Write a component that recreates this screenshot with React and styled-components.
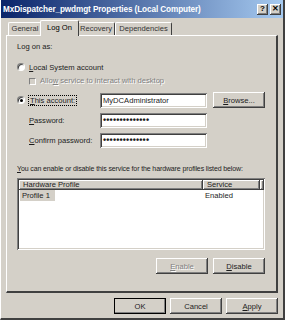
import React from 'react';
import styled, {createGlobalStyle} from "styled-components";

const Global = createGlobalStyle`
  html, body { margin: 0; padding: 0; background: #d4d0c8; }
  body { font-family: "Liberation Sans", Arial, sans-serif; font-size: 7.6px; color: #1c1c1c; }
  * { box-sizing: border-box; }
`

const raised = `box-shadow: inset -1px -1px #404040, inset 1px 1px #ffffff, inset -2px -2px #808080, inset 2px 2px #d4d0c8;`
const sunken = `box-shadow: inset 1px 1px #808080, inset -1px -1px #ffffff, inset 2px 2px #404040, inset -2px -2px #d4d0c8;`

const Window = styled.div`
  width: 285px;
  height: 320px;
  background: #d4d0c8;
  border-right: 2px solid #404040;
  border-bottom: 2px solid #404040;
  border-left: 1px solid #ffffff;
  display: flex;
  flex-direction: column;
`

const TitleBar = styled.div`
  height: 18px;
  background: linear-gradient(to right, #0a246a, #a6caf0);
  display: flex;
  align-items: center;
  justify-content: space-between;
  padding: 0 2px 0 2px;
`

const Title = styled.span`
  color: white;
  font-weight: bold;
  font-size: 8.2px;
  letter-spacing: -0.1px;
`

const TitleButtons = styled.div`
  display: flex;
  gap: 2px;
`

const TitleButton = styled.div`
  width: 11px;
  height: 11px;
  background: #d4d0c8;
  ${raised}
  display: flex;
  align-items: center;
  justify-content: center;
  font-weight: bold;
  font-size: 8px;
  line-height: 1;
  color: #000;
`

const TabStrip = styled.div`
  height: 16px;
  margin-top: 1px;
  padding-left: 7px;
  display: flex;
  align-items: flex-end;
  position: relative;
  z-index: 1;
`

const Tab = styled.div`
  height: ${props => props.active ? "16px" : "13px"};
  width: ${props => props.w}px;
  margin: ${props => props.active ? "0 -2px 0 -2px" : "0"};
  padding-top: ${props => props.active ? "2px" : "1px"};
  text-align: center;
  background: #d4d0c8;
  border-top: 1px solid #ffffff;
  border-left: 1px solid #ffffff;
  border-right: 1px solid #404040;
  border-top-left-radius: 2px;
  border-top-right-radius: 2px;
  margin-bottom: ${props => props.active ? "-1px" : "0"};
  color: ${props => props.active ? "#000" : "#333"};
  position: relative;
  z-index: ${props => props.active ? 2 : 1};
`

const Panel = styled.div`
  margin: 0 5px 0 5px;
  height: 258px;
  border-top: 1px solid #ffffff;
  border-left: 1px solid #ffffff;
  border-right: 2px solid #404040;
  border-bottom: 2px solid #404040;
  padding: 6px 11px 0 10px;
  display: flex;
  flex-direction: column;
`

const Label = styled.div`
  height: 10px;
  line-height: 10px;
  white-space: nowrap;
  font-size: ${props => props.small ? "7px" : "inherit"};
  letter-spacing: ${props => props.small ? "-0.12px" : "0"};
  margin-top: ${props => props.mt || 0}px;
  color: ${props => props.disabled ? "#808080" : "inherit"};
  text-shadow: ${props => props.disabled ? "1px 1px #ffffff" : "none"};
`

const OptionRow = styled.div`
  display: flex;
  align-items: center;
  height: ${props => props.h || 10}px;
  margin-top: ${props => props.mt || 0}px;
  padding-left: ${props => props.indent || 0}px;
`

const Radio = styled.span`
  width: 8px;
  height: 8px;
  border-radius: 50%;
  background: white;
  border: 1px solid;
  border-color: #808080 #ffffff #ffffff #808080;
  box-shadow: inset 1px 1px #404040;
  display: flex;
  align-items: center;
  justify-content: center;
  margin-right: 4px;
  &::after {
    content: "";
    display: ${props => props.checked ? "block" : "none"};
    width: 3px;
    height: 3px;
    border-radius: 50%;
    background: #000;
  }
`

const Check = styled.span`
  width: 7px;
  height: 7px;
  background: #d4d0c8;
  border: 1px solid;
  border-color: #808080 #ffffff #ffffff #808080;
  margin-right: 4px;
`

const Focus = styled.span`
  outline: 1px dotted #000;
  outline-offset: 0;
  padding: 0 1px;
`

const FieldRow = styled.div`
  display: flex;
  align-items: center;
  height: 16px;
  margin-top: ${props => props.mt || 0}px;
`

const FieldLabel = styled.div`
  width: ${props => props.w}px;
  padding-left: ${props => props.indent || 0}px;
  display: flex;
  align-items: center;
`

const TextBox = styled.div`
  width: 107px;
  height: 15px;
  background: white;
  ${sunken}
  padding: 0 3px;
  line-height: 15px;
  white-space: nowrap;
  overflow: hidden;
  letter-spacing: ${props => props.dots ? "0.15px" : "0"};
  font-size: ${props => props.dots ? "9px" : "7.6px"};
  font-weight: ${props => props.dots ? "bold" : "normal"};
`

const Button = styled.div`
  width: ${props => props.w || 52}px;
  height: 16px;
  background: #d4d0c8;
  ${raised}
  ${props => props.isDefault ? "outline: 1px solid #000; outline-offset: -1px;" : ""}
  display: flex;
  align-items: center;
  justify-content: center;
  color: ${props => props.disabled ? "#808080" : "inherit"};
  text-shadow: ${props => props.disabled ? "1px 1px #ffffff" : "none"};
  margin-left: ${props => props.ml || 0}px;
`

const ListBox = styled.div`
  margin-top: 4px;
  width: 248px;
  height: 72px;
  background: white;
  ${sunken}
  padding: 2px;
`

const HeaderRow = styled.div`
  display: flex;
  height: 10px;
`

const HeaderCell = styled.div`
  width: ${props => props.w}px;
  flex: ${props => props.grow ? 1 : "none"};
  background: #d4d0c8;
  ${raised}
  padding-left: 4px;
  line-height: 10px;
`

const ListRow = styled.div`
  display: flex;
  height: 11px;
  line-height: 11px;
`

const Cell = styled.div`
  width: ${props => props.w}px;
  padding-left: 2px;
`

const Selected = styled.span`
  background: #d4d0c8;
  padding: 0 5px 0 2px;
  display: inline-block;
  margin-left: -1px;
`

const RightRow = styled.div`
  display: flex;
  justify-content: flex-end;
  margin-top: ${props => props.mt || 0}px;
`

const Footer = styled.div`
  display: flex;
  justify-content: flex-end;
  gap: 4px;
  padding: 5px 5px 0 0;
`

const U = styled.span`text-decoration: underline;`

export default function App() {
    return (
        <Window>
            <Global/>
            <TitleBar>
                <Title>MxDispatcher_pwdmgt Properties (Local Computer)</Title>
                <TitleButtons>
                    <TitleButton>?</TitleButton>
                    <TitleButton>✕</TitleButton>
                </TitleButtons>
            </TitleBar>
            <TabStrip>
                <Tab w={34}>General</Tab>
                <Tab w={39} active>Log On</Tab>
                <Tab w={38}>Recovery</Tab>
                <Tab w={57}>Dependencies</Tab>
            </TabStrip>
            <Panel>
                <Label>Log on as:</Label>
                <OptionRow mt={10}>
                    <Radio/>
                    <span><U>L</U>ocal System account</span>
                </OptionRow>
                <OptionRow mt={4} indent={12}>
                    <Check/>
                    <Label disabled>Allo<U>w</U> service to interact with desktop</Label>
                </OptionRow>
                <FieldRow mt={6}>
                    <FieldLabel w={83}>
                        <Radio checked/>
                        <Focus><U>T</U>his account:</Focus>
                    </FieldLabel>
                    <TextBox>MyDCAdministrator</TextBox>
                    <Button ml={6}><U>B</U>rowse...</Button>
                </FieldRow>
                <FieldRow mt={4}>
                    <FieldLabel w={83} indent={12}><U>P</U>assword:</FieldLabel>
                    <TextBox dots>••••••••••••••</TextBox>
                </FieldRow>
                <FieldRow mt={4}>
                    <FieldLabel w={83} indent={12}><U>C</U>onfirm password:</FieldLabel>
                    <TextBox dots>••••••••••••••</TextBox>
                </FieldRow>
                <Label mt={16} small><U>Y</U>ou can enable or disable this service for the hardware profiles listed below:</Label>
                <ListBox>
                    <HeaderRow>
                        <HeaderCell w={184}>Hardware Profile</HeaderCell>
                        <HeaderCell w={57}>Service</HeaderCell>
                        <HeaderCell grow/>
                    </HeaderRow>
                    <ListRow>
                        <Cell w={184}><Selected>Profile 1</Selected></Cell>
                        <Cell w={57}>Enabled</Cell>
                    </ListRow>
                </ListBox>
                <RightRow mt={8}>
                    <Button disabled><U>E</U>nable</Button>
                    <Button ml={5}><U>D</U>isable</Button>
                </RightRow>
            </Panel>
            <Footer>
                <Button isDefault>OK</Button>
                <Button>Cancel</Button>
                <Button><U>A</U>pply</Button>
            </Footer>
        </Window>
    );
}
